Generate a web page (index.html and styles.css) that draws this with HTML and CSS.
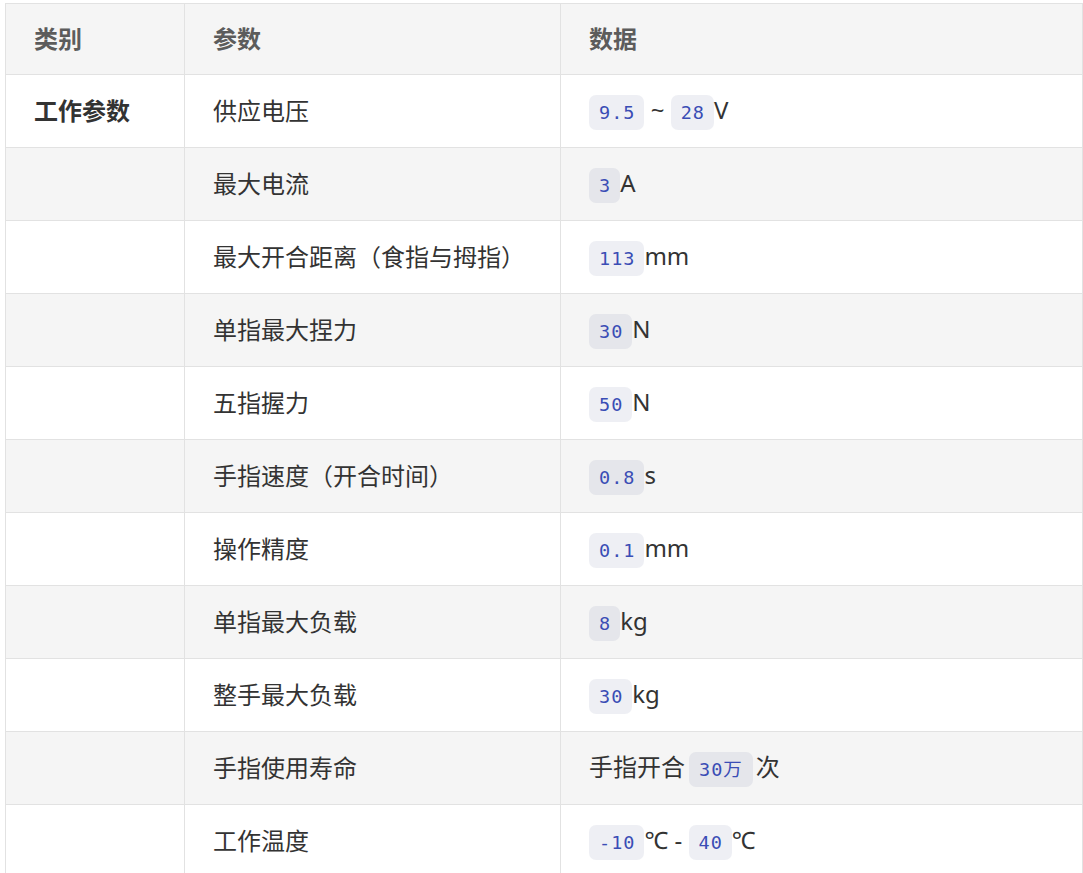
FILE: index.html
```html
<!DOCTYPE html>
<html lang="zh">
<head>
<meta charset="utf-8">
<title>参数表</title>
<link rel="stylesheet" href="styles.css">
</head>
<body>
<table class="spec">
  <colgroup>
    <col class="c1"><col class="c2"><col class="c3">
  </colgroup>
  <thead>
    <tr><th>类别</th><th>参数</th><th>数据</th></tr>
  </thead>
  <tbody>
    <tr><td><strong>工作参数</strong></td><td>供应电压</td><td><code>9.5</code> ~ <code>28</code>V</td></tr>
    <tr><td></td><td>最大电流</td><td><code>3</code>A</td></tr>
    <tr><td></td><td>最大开合距离（食指与拇指）</td><td><code>113</code>mm</td></tr>
    <tr><td></td><td>单指最大捏力</td><td><code>30</code>N</td></tr>
    <tr><td></td><td>五指握力</td><td><code>50</code>N</td></tr>
    <tr><td></td><td>手指速度（开合时间）</td><td><code>0.8</code>s</td></tr>
    <tr><td></td><td>操作精度</td><td><code>0.1</code>mm</td></tr>
    <tr><td></td><td>单指最大负载</td><td><code>8</code>kg</td></tr>
    <tr><td></td><td>整手最大负载</td><td><code>30</code>kg</td></tr>
    <tr><td></td><td>手指使用寿命</td><td>手指开合<code class="inline-gap">30万</code>次</td></tr>
    <tr><td></td><td>工作温度</td><td><code>-10</code>℃ - <code>40</code>℃</td></tr>
  </tbody>
</table>
</body>
</html>
```

FILE: styles.css
```css
html, body {
  background: #ffffff;
}
body {
  margin: 3px 0 0 5px;
  font-family: "Noto Sans", "Noto Sans CJK SC", sans-serif;
  color: #333333;
}
.spec {
  border-collapse: collapse;
  table-layout: fixed;
  width: 1077px;
  font-size: 24px;
  line-height: 34px;
}
.c1 { width: 179px; }
.c2 { width: 376px; }
.c3 { width: 522px; }
.spec thead tr { height: 71px; }
.spec tbody tr { height: 73px; }
.spec th,
.spec td {
  border: 1px solid #e2e2e2;
  padding: 0 28px;
  text-align: left;
  vertical-align: middle;
  white-space: nowrap;
}
.spec th {
  background: #f5f5f5;
  color: #5c5c5c;
  font-weight: 700;
}
.spec tbody tr:nth-child(even) td {
  background: #f5f5f5;
}
.spec strong {
  font-weight: 700;
  color: #333333;
}
.spec code {
  display: inline-block;
  font-family: "DejaVu Sans Mono", "Noto Sans CJK SC", monospace;
  font-size: 18.5px;
  letter-spacing: 1px;
  line-height: 35px;
  padding: 0 9px 0 10px;
  border-radius: 7px;
  background: rgba(90, 100, 150, 0.1);
  color: #3a4db5;
}
.spec code.inline-gap {
  margin: 0 3px 0 4px;
  padding-right: 10px;
}
```
